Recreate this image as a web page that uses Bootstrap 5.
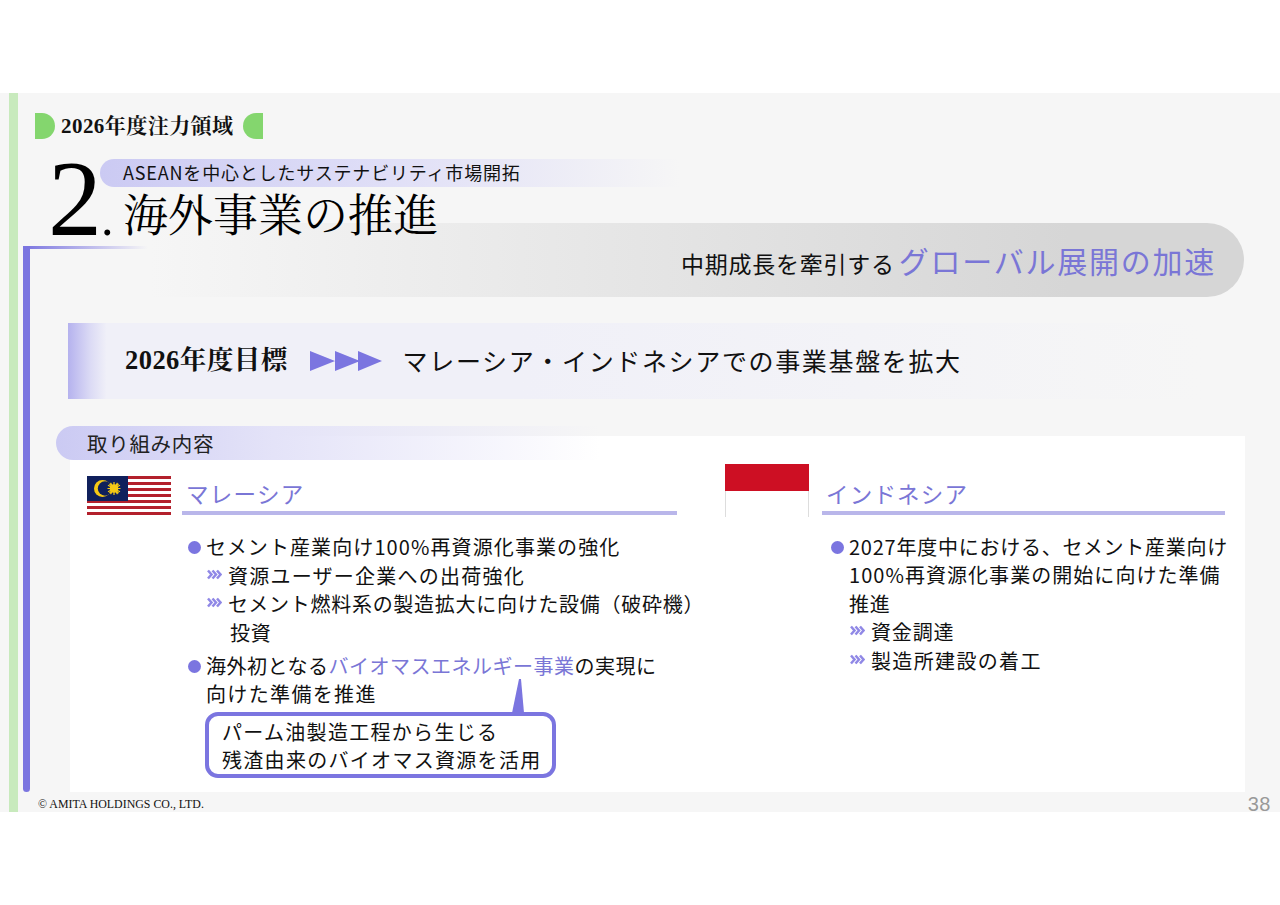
<!DOCTYPE html>
<html lang="ja">
<head>
<meta charset="utf-8">
<title>2026年度注力領域</title>
<link href="https://cdn.jsdelivr.net/npm/bootstrap@5.3.0/dist/css/bootstrap.min.css" rel="stylesheet">
<style>
html,body{background:#fff;overflow:hidden}
body{font-family:"Noto Sans CJK JP","Noto Sans",sans-serif;color:#111;height:905px}
.serif{font-family:"Liberation Serif","Noto Serif CJK JP","Noto Sans CJK JP",serif}
.slide{margin-top:93px;height:719px;background:#f6f6f6;padding-left:9px}
.strip{width:9px;background:#c8eabd;flex:none}
.main{width:1262px;flex:none}
.kicker{height:26px;margin:20px 0 0 17px}
.half-r{width:20px;height:26px;background:#84d66e;border-radius:0 13px 13px 0}
.half-l{width:20px;height:26px;background:#84d66e;border-radius:13px 0 0 13px}
.kicker-text{font-size:21px;font-weight:700;line-height:28px;margin:0 9px 0 6px;letter-spacing:.45px;white-space:nowrap}
.title-row{height:107px;position:relative;z-index:1}
.num{width:52px;margin-left:30px;font-size:108px;line-height:120px;height:107px;position:relative;flex:none;white-space:nowrap;color:#000;letter-spacing:-2px}
.num-dot{font-size:50px;line-height:1;margin-left:1px}
.title-col{width:600px;padding-top:20px}
.sub-pill{height:28px;width:580px;border-radius:14px 0 0 14px;background:linear-gradient(90deg,#cbcaf3 0,#e0dff7 50%,rgba(245,245,245,0) 100%);padding-left:23px;font-size:18px;line-height:27px;letter-spacing:.82px;white-space:nowrap}
.main-title{font-size:45px;line-height:54px;margin:3px 0 0 23px;white-space:nowrap;font-weight:400;color:#000}
.frame{height:546px}
.frame-bar{width:7px;margin-left:5px;background:#7b75e0;border-radius:4px 0 4px 4px;flex:none}
.frame-body{position:relative;flex:1;min-width:0}
.frame-top{position:absolute;left:-7px;top:0;width:125px;height:3px;background:linear-gradient(90deg,#7b75e0,rgba(123,117,224,0))}
.lead-pill{height:74px;margin:-23px 36px 0 120px;border-radius:0 37px 37px 0;background:linear-gradient(90deg,rgba(214,214,214,0) 0,#d6d6d6 84%);padding-right:28px;position:relative}
.lead-a{font-size:23px;letter-spacing:.75px;margin-right:4px;line-height:40px;padding-top:6px}
.lead-b{font-size:30px;letter-spacing:1.75px;color:#7a76d6;line-height:40px}
.goal{height:76px;margin:26px 78px 0 38px;background:linear-gradient(90deg,#b5b2ee 0,#dcdbf5 2%,#f0f0f8 3.4%,#f0f0f8 40%,rgba(245,245,245,0) 100%);padding-left:57px}
.goal-year{font-size:26.5px;font-weight:700;letter-spacing:.45px;margin-right:22px;white-space:nowrap}
.goal-text{font-size:25px;letter-spacing:1.65px;margin-left:21px;white-space:nowrap}
.tag{height:34px;width:544px;margin:27px 0 0 26px;border-radius:17px 0 0 17px;background:linear-gradient(90deg,#cbcaf3 0,#e4e3f8 40%,rgba(245,245,245,0) 100%);padding-left:31px;font-size:20.5px;line-height:34px;letter-spacing:.7px;position:relative;z-index:1;color:#222}
.panel{height:356px;margin:-24px 35px 0 40px;background:#fff;padding-top:28px}
.col-my{width:635px;padding-left:17px;flex:none}
.col-id{padding-left:20px;width:540px;flex:none}
.flag-my{width:84px;height:39px;margin-top:12px;flex:none;display:block}
.flag-id{width:84px;height:53px;flex:none;display:block}
.head{height:51px;margin-left:11px;border-bottom:4px solid #b9b6ea;width:495px;color:#7a76d6;font-size:22.5px;letter-spacing:1.3px;padding:13px 0 0 4px;line-height:32px}
.head-id{margin-left:13px;width:403px;letter-spacing:1.2px}
.items{list-style:none;margin:18px 0 0;padding:0;font-size:20px;line-height:28.5px;letter-spacing:.85px;color:#111;white-space:nowrap}
.my-list{margin-left:101px}
.id-list{margin-left:106px;margin-top:15.5px}
.item{position:relative;padding-left:18px}
.item+.item{margin-top:4.5px}
.dot{position:absolute;left:0;top:8px;width:13px;height:13px;background:#7b75e0;border-radius:50%}
.sub{position:relative;padding-left:22px}
.chev{position:absolute;left:1px;top:7px;width:15px;height:11px}
.sub-wrap{padding-left:2px}
.accent{color:#7a76d6}
.lsa{letter-spacing:1.1px}
.lsb{letter-spacing:1.25px}
.lsc{letter-spacing:.72px}
.lsd{letter-spacing:.5px}
.lse{letter-spacing:1.35px}
.lsf{letter-spacing:.75px}
.lsg{letter-spacing:1.05px}
.callout{position:relative;width:351px;height:66px;margin:3px 0 0 -1px;border:4px solid #7b75e0;border-radius:13px;background:#fff;padding:2px 0 0 13px;line-height:28.5px;font-size:20px;letter-spacing:1.3px}
.tail{position:absolute;left:303px;top:-37px;width:12px;height:34px}
.foot{height:20px;padding:0 9px 0 20px}
.copy{font-size:11.9px;line-height:24px}
.page{font-family:"Liberation Sans",sans-serif;font-size:20px;color:#999;line-height:24px;letter-spacing:.5px}
</style>
</head>
<body>
<section class="slide d-flex">
  <div class="strip"></div>
  <div class="main d-flex flex-column">
    <div class="kicker d-flex align-items-center">
      <span class="half-r"></span>
      <span class="kicker-text serif">2026年度注力領域</span>
      <span class="half-l"></span>
    </div>
    <div class="title-row d-flex">
      <div class="num serif">2<span class="num-dot">.</span></div>
      <div class="title-col">
        <div class="sub-pill">ASEANを中心としたサステナビリティ市場開拓</div>
        <h1 class="main-title serif">海外事業の推進</h1>
      </div>
    </div>
    <div class="frame d-flex">
      <div class="frame-bar"></div>
      <div class="frame-body">
        <div class="frame-top"></div>
        <div class="lead-pill d-flex justify-content-end align-items-center">
          <span class="lead-a">中期成長を牽引する</span><span class="lead-b">グローバル展開の加速</span>
        </div>
        <div class="goal d-flex align-items-center">
          <span class="goal-year serif">2026年度目標</span>
          <svg width="72" height="20" viewBox="0 0 72 20" aria-hidden="true"><path fill="#7b75e0" d="M0 0 25 10 0 20zM25 0 50 10 25 20zM48 0 72 10 48 20z"/></svg>
          <span class="goal-text">マレーシア・インドネシアでの事業基盤を拡大</span>
        </div>
        <div class="tag">取り組み内容</div>
        <div class="panel d-flex">
          <div class="col-my">
            <div class="d-flex align-items-start">
              <svg class="flag-my" viewBox="0 0 84 39" aria-hidden="true">
                <rect width="84" height="39" fill="#fff"/>
                <g fill="#b3202c"><rect y="0" width="84" height="3"/><rect y="6" width="84" height="3"/><rect y="12" width="84" height="3"/><rect y="18" width="84" height="3"/><rect y="24" width="84" height="3"/><rect y="30" width="84" height="3"/><rect y="36" width="84" height="3"/></g>
                <rect width="41" height="25" fill="#10205c"/>
                <circle cx="15.500" cy="12.500" r="8.500" fill="#f6c915"/>
                <circle cx="18" cy="12.500" r="7.200" fill="#10205c"/>
                <g stroke="#f6c915" stroke-width="1.200"><path d="M27 6v13M20.500 12.500h13M22.400 7.900l9.200 9.200M31.600 7.900l-9.200 9.200M23.500 6.900l7 11.200M30.500 6.900l-7 11.200M21 9.300l12 6.400M33 9.300l-12 6.400"/></g>
                <circle cx="27" cy="12.500" r="4.300" fill="#f6c915"/>
              </svg>
              <div class="head">マレーシア</div>
            </div>
            <ul class="items my-list">
              <li class="item"><span class="dot"></span><span class="lsa">セメント産業向け100%再資源化事業の強化</span>
                <div class="sub lsb"><svg class="chev" viewBox="0 0 15 11" aria-hidden="true"><path fill="none" stroke="#9088e6" stroke-width="2.500" d="M1 1.500 4.500 5.500 1 9.500M5.500 1.500 9 5.500 5.500 9.500M10 1.500 13.500 5.500 10 9.500"/></svg>資源ユーザー企業への出荷強化</div>
                <div class="sub lsc"><svg class="chev" viewBox="0 0 15 11" aria-hidden="true"><path fill="none" stroke="#9088e6" stroke-width="2.500" d="M1 1.500 4.500 5.500 1 9.500M5.500 1.500 9 5.500 5.500 9.500M10 1.500 13.500 5.500 10 9.500"/></svg>セメント燃料系の製造拡大に向けた設備（破砕機）<br><span class="sub-wrap">投資</span></div>
              </li>
              <li class="item"><span class="dot"></span><span class="lsd">海外初となる<span class="accent">バイオマスエネルギー事業</span>の実現に</span><br><span class="lse">向けた準備を推進</span>
                <div class="callout">
                  <svg class="tail" viewBox="0 0 12 34" aria-hidden="true"><path fill="#7b75e0" d="M7 0H9L12 34H0z"/></svg>
                  パーム油製造工程から生じる<br>残渣由来のバイオマス資源を活用
                </div>
              </li>
            </ul>
          </div>
          <div class="col-id">
            <div class="d-flex align-items-start">
              <svg class="flag-id" viewBox="0 0 84 53" aria-hidden="true">
                <rect width="84" height="53" fill="#fff"/>
                <rect width="84" height="27" fill="#cd0f23"/>
                <path d="M.5 27v26M83.500 27v26" stroke="#ddd" fill="none"/>
              </svg>
              <div class="head head-id">インドネシア</div>
            </div>
            <ul class="items id-list">
              <li class="item"><span class="dot"></span><span class="lsf">2027年度中における、セメント産業向け</span><br><span class="lsg">100%再資源化事業の開始に向けた準備</span><br>推進
                <div class="sub"><svg class="chev" viewBox="0 0 15 11" aria-hidden="true"><path fill="none" stroke="#9088e6" stroke-width="2.500" d="M1 1.500 4.500 5.500 1 9.500M5.500 1.500 9 5.500 5.500 9.500M10 1.500 13.500 5.500 10 9.500"/></svg>資金調達</div>
                <div class="sub lse"><svg class="chev" viewBox="0 0 15 11" aria-hidden="true"><path fill="none" stroke="#9088e6" stroke-width="2.500" d="M1 1.500 4.500 5.500 1 9.500M5.500 1.500 9 5.500 5.500 9.500M10 1.500 13.500 5.500 10 9.500"/></svg>製造所建設の着工</div>
              </li>
            </ul>
          </div>
        </div>
      </div>
    </div>
    <div class="foot d-flex justify-content-between">
      <span class="copy serif">© AMITA HOLDINGS CO., LTD.</span>
      <span class="page">38</span>
    </div>
  </div>
</section>
<script src="https://cdn.jsdelivr.net/npm/bootstrap@5.3.0/dist/js/bootstrap.bundle.min.js"></script>
</body>
</html>
